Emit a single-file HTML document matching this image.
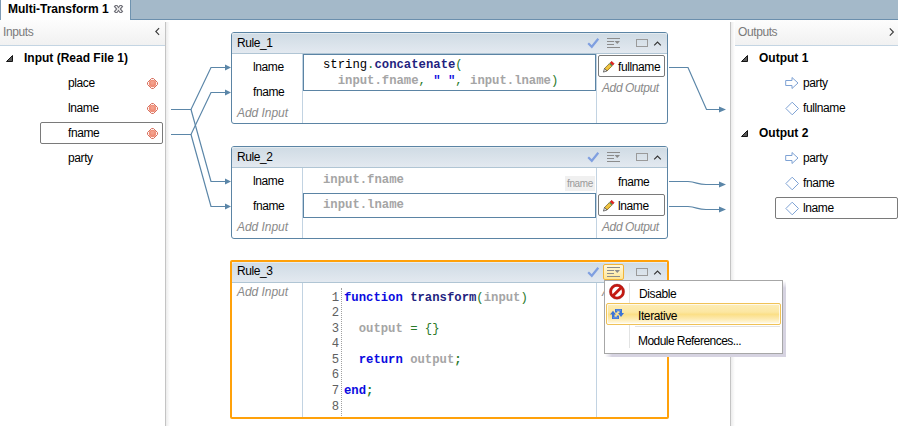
<!DOCTYPE html>
<html><head><meta charset="utf-8">
<style>
*{margin:0;padding:0;box-sizing:border-box}
html,body{width:898px;height:426px;overflow:hidden;background:#fff;position:relative;font-family:"Liberation Sans",sans-serif;font-size:12px;line-height:14px;letter-spacing:-0.4px;color:#000}
.a{position:absolute;white-space:pre}
.mono{font-family:"Liberation Mono",monospace;font-size:12.25px;line-height:15.6px;letter-spacing:0}
#tabbar{left:0;top:0;width:898px;height:20px;background:#a4b9c9;border-bottom:1px solid #6b8fad}
#tab{left:0;top:0;width:130px;height:20px;background:#fff;border-left:1px solid #7e9bb6}
.panelhdr{height:26px;background:linear-gradient(#fdfdfd,#f1f1f1);border-bottom:1px solid #c4d5e3}
.hdrtxt{color:#7a7a7a}
.b{font-weight:bold;font-size:12px;letter-spacing:0}
.rule{border:1px solid #5b84a4;border-radius:3px;background:#fff}
.rhdr{box-shadow:inset 0 1px #e4ebf0;background:linear-gradient(#cfdbe4,#e3e9f0);border-bottom:1px solid #b0c5d4;border-radius:2px 2px 0 0}
.it{font-style:italic;color:#8a8a8a}
.vdiv{width:1px;background:#c2d3e2}
.codebox{border:1px solid #5b84a4}
</style></head><body>

<!-- tab bar -->
<div id="tabbar" class="a"></div>
<div id="tab" class="a"></div>
<div class="a" style="left:130px;top:0;width:1px;height:20px;background:#6f93af"></div>
<div class="a b" style="left:8px;top:2px;font-size:12px">Multi-Transform 1</div>
<svg class="a" style="left:113px;top:4px" width="12" height="11" viewBox="0 0 12 11">
 <path d="M1.5 2.5 L2.5 1.5 L4 1.5 L5.5 3.5 L7 1.5 L8.5 1.5 L9.5 2.5 L7.3 5 L9.5 7.5 L8.5 8.5 L7 8.5 L5.5 6.5 L4 8.5 L2.5 8.5 L1.5 7.5 L3.7 5 Z" fill="#f6f6f6" stroke="#72727a" stroke-width="1.15"/>
</svg>

<!-- left panel -->
<div class="a panelhdr" style="left:0;top:20px;width:165px"></div>
<div class="a hdrtxt" style="left:3px;top:25px">Inputs</div>
<svg class="a" style="left:153px;top:27px" width="8" height="11"><path d="M6.1 1.1 L2.8 4.5 L6.1 7.9" stroke="#3a3a3a" stroke-width="1.1" fill="none"/></svg>
<div class="a" style="left:165px;top:22px;width:1px;height:404px;background:#c4c4c4"></div>
<div class="a" style="left:166px;top:22px;width:4px;height:404px;background:linear-gradient(90deg,#ececec,#fff)"></div>

<svg class="a" style="left:5px;top:54px" width="9" height="9"><path d="M7.5 1.5 L7.5 7.5 L1.5 7.5 Z" fill="#5a5a5a" stroke="#151515" stroke-width="1" stroke-linejoin="miter"/></svg>
<div class="a b" style="left:24px;top:51px">Input (Read File 1)</div>
<div class="a" style="left:68px;top:76px">place</div>
<div class="a" style="left:68px;top:101px">lname</div>
<div class="a" style="left:40px;top:122px;width:123px;height:22px;border:1px solid #7a7a7a;border-radius:2px"></div>
<div class="a" style="left:68px;top:126px">fname</div>
<div class="a" style="left:68px;top:151px">party</div>

<!-- orange diamonds -->
<svg class="a" style="left:146px;top:77px" width="13" height="13" viewBox="0 0 13 13"><path d="M5.5 1.5 H7.5 L11.5 5.5 V7.5 L7.5 11.5 H5.5 L1.5 7.5 V5.5 Z" fill="#fff" stroke="#d6705f" stroke-width="1"/><circle cx="6.5" cy="6.5" r="3.7" fill="#ef8e78"/><circle cx="6.5" cy="5.8" r="2" fill="#f6ab98" opacity="0.6"/></svg>
<svg class="a" style="left:146px;top:102px" width="13" height="13" viewBox="0 0 13 13"><path d="M5.5 1.5 H7.5 L11.5 5.5 V7.5 L7.5 11.5 H5.5 L1.5 7.5 V5.5 Z" fill="#fff" stroke="#d6705f" stroke-width="1"/><circle cx="6.5" cy="6.5" r="3.7" fill="#ef8e78"/><circle cx="6.5" cy="5.8" r="2" fill="#f6ab98" opacity="0.6"/></svg>
<svg class="a" style="left:146px;top:127px" width="13" height="13" viewBox="0 0 13 13"><path d="M5.5 1.5 H7.5 L11.5 5.5 V7.5 L7.5 11.5 H5.5 L1.5 7.5 V5.5 Z" fill="#fff" stroke="#d6705f" stroke-width="1"/><circle cx="6.5" cy="6.5" r="3.7" fill="#ef8e78"/><circle cx="6.5" cy="5.8" r="2" fill="#f6ab98" opacity="0.6"/></svg>

<!-- right panel -->
<div class="a" style="left:730px;top:22px;width:1px;height:404px;background:#c4c4c4"></div>
<div class="a" style="left:731px;top:22px;width:4px;height:404px;background:linear-gradient(90deg,#ececec,#fff)"></div>
<div class="a panelhdr" style="left:735px;top:20px;width:163px"></div>
<div class="a hdrtxt" style="left:738px;top:25px">Outputs</div>
<svg class="a" style="left:888px;top:27px" width="8" height="11"><path d="M1.8 1.3 L5.4 5 L1.8 8.7" stroke="#3a3a3a" stroke-width="1.1" fill="none"/></svg>

<svg class="a" style="left:740px;top:54px" width="9" height="9"><path d="M7.5 1.5 L7.5 7.5 L1.5 7.5 Z" fill="#5a5a5a" stroke="#151515" stroke-width="1" stroke-linejoin="miter"/></svg>
<div class="a b" style="left:759px;top:51px">Output 1</div>
<svg class="a" style="left:784px;top:76px" width="16" height="14"><path d="M1.7 4.5 H8 V1.5 L14 7 L8 12.5 V9.5 H1.7 Z" fill="none" stroke="#7ea2d4" stroke-width="1"/></svg>
<div class="a" style="left:803px;top:76px">party</div>
<svg class="a" style="left:785px;top:101px" width="15" height="15"><path d="M7.2 1.2 L13.5 7.5 L7.2 13.8 L0.9 7.5 Z" fill="none" stroke="#7ea2d4" stroke-width="1"/></svg>
<div class="a" style="left:803px;top:101px">fullname</div>

<svg class="a" style="left:740px;top:129px" width="9" height="9"><path d="M7.5 1.5 L7.5 7.5 L1.5 7.5 Z" fill="#5a5a5a" stroke="#151515" stroke-width="1" stroke-linejoin="miter"/></svg>
<div class="a b" style="left:759px;top:126px">Output 2</div>
<svg class="a" style="left:784px;top:151px" width="16" height="14"><path d="M1.7 4.5 H8 V1.5 L14 7 L8 12.5 V9.5 H1.7 Z" fill="none" stroke="#7ea2d4" stroke-width="1"/></svg>
<div class="a" style="left:803px;top:151px">party</div>
<svg class="a" style="left:785px;top:176px" width="15" height="15"><path d="M7.2 1.2 L13.5 7.5 L7.2 13.8 L0.9 7.5 Z" fill="none" stroke="#7ea2d4" stroke-width="1"/></svg>
<div class="a" style="left:803px;top:176px">fname</div>
<div class="a" style="left:775px;top:197px;width:123px;height:22px;border:1px solid #7a7a7a;border-radius:2px"></div>
<svg class="a" style="left:785px;top:201px" width="15" height="15"><path d="M7.2 1.2 L13.5 7.5 L7.2 13.8 L0.9 7.5 Z" fill="none" stroke="#7ea2d4" stroke-width="1"/></svg>
<div class="a" style="left:803px;top:201px">lname</div>

<!-- connectors -->
<svg class="a" style="left:0;top:0" width="898" height="426">
 <g stroke="#5b86a8" stroke-width="1.2" fill="none">
  <path d="M171 109.5 H191 L211 67.5 H226"/>
  <path d="M191 109.5 L211 181.5 H226"/>
  <path d="M171 134.5 H191 L211 92.5 H226"/>
  <path d="M191 134.5 L211 206.5 H226"/>
  <path d="M669 67.5 H688 L706.5 109.5 H720"/>
  <path d="M669 181.5 H688 C697 182 697 184.5 706 184.5 H720"/>
  <path d="M669 206.5 H688 C697 207 697 209.5 706 209.5 H720"/>
 </g>
 <g fill="#5b86a8">
  <path d="M225 64.5 L231 67.5 L225 70.5 Z"/>
  <path d="M225 89.5 L231 92.5 L225 95.5 Z"/>
  <path d="M225 178.5 L231 181.5 L225 184.5 Z"/>
  <path d="M225 203.5 L231 206.5 L225 209.5 Z"/>
  <path d="M719 106.5 L726 109.5 L719 112.5 Z"/>
  <path d="M719 181.5 L726 184.5 L719 187.5 Z"/>
  <path d="M719 206.5 L726 209.5 L719 212.5 Z"/>
 </g>
</svg>

<!-- RULES -->

<!-- ===== Rule 1 ===== -->
<div class="a rule" style="left:231px;top:32px;width:437px;height:92px"></div>
<div class="a rhdr" style="left:232px;top:33px;width:435px;height:21px"></div>
<div class="a" style="left:237px;top:36px">Rule_1</div>
<div class="a vdiv" style="left:302px;top:54px;height:69px"></div>
<div class="a vdiv" style="left:596px;top:54px;height:69px"></div>
<div class="a codebox" style="left:303px;top:54px;width:293px;height:37px"></div>
<div class="a" style="left:253px;top:60px">lname</div>
<div class="a" style="left:253px;top:85px">fname</div>
<div class="a it" style="left:237px;top:106px;letter-spacing:-0.05px">Add Input</div>
<div class="a mono" style="left:323px;top:58px"><span style="color:#000">string</span><span style="color:#2a7a2a">.</span><b style="color:#1f1f80">concatenate</b><span style="color:#2a7a2a">(</span></div>
<div class="a mono" style="left:323px;top:74px">  <b style="color:#a5a5a5">input.fname</b><span style="color:#2a7a2a">, </span><b style="color:#1010e0">" "</b><span style="color:#2a7a2a">, </span><b style="color:#a5a5a5">input.lname</b><span style="color:#2a7a2a">)</span></div>
<div class="a" style="left:598px;top:55px;width:67px;height:22px;border:1px solid #7a7a7a;border-radius:2px"></div>
<div class="a" style="left:618px;top:60px">fullname</div>
<div class="a it" style="left:602px;top:81px">Add Output</div>

<!-- ===== Rule 2 ===== -->
<div class="a rule" style="left:231px;top:146px;width:437px;height:93px"></div>
<div class="a rhdr" style="left:232px;top:147px;width:435px;height:21px"></div>
<div class="a" style="left:237px;top:150px">Rule_2</div>
<div class="a vdiv" style="left:302px;top:168px;height:70px"></div>
<div class="a vdiv" style="left:596px;top:168px;height:70px"></div>
<div class="a" style="left:253px;top:174px">lname</div>
<div class="a" style="left:253px;top:199px">fname</div>
<div class="a it" style="left:237px;top:220px;letter-spacing:-0.05px">Add Input</div>
<div class="a mono" style="left:323px;top:173px"><b style="color:#a5a5a5">input.fname</b></div>
<div class="a" style="left:565px;top:176px;width:30px;height:15px;background:#f0f0f0"></div>
<div class="a" style="left:567px;top:177px;font-size:10px;color:#9a9a9a">fname</div>
<div class="a codebox" style="left:303px;top:193px;width:293px;height:25px"></div>
<div class="a mono" style="left:323px;top:198px"><b style="color:#a5a5a5">input.lname</b></div>
<div class="a" style="left:618px;top:175px">fname</div>
<div class="a" style="left:598px;top:194px;width:67px;height:22px;border:1px solid #7a7a7a;border-radius:2px"></div>
<div class="a" style="left:618px;top:199px">lname</div>
<div class="a it" style="left:602px;top:220px">Add Output</div>

<!-- ===== Rule 3 ===== -->
<div class="a" style="left:230px;top:260px;width:439px;height:159px;border:2px solid #ffa10a;border-radius:2px;background:#fff"></div>
<div class="a rhdr" style="left:232px;top:262px;width:435px;height:21px"></div>
<div class="a" style="left:237px;top:264px">Rule_3</div>
<div class="a vdiv" style="left:302px;top:283px;height:134px"></div>
<div class="a vdiv" style="left:596px;top:283px;height:134px"></div>
<div class="a it" style="left:237px;top:285px;letter-spacing:-0.05px">Add Input</div>
<div class="a it" style="left:602px;top:285px">Add Output</div>
<div class="a" style="left:341px;top:288px;height:128px;border-left:1px dotted #a0a0a0"></div>
<div class="a mono" style="left:320px;top:290.5px;width:19px;text-align:right;color:#606060;line-height:15.6px">1
2
3
4
5
6
7
8</div>
<div class="a mono" style="left:344px;top:290.5px;line-height:15.6px"><b style="color:#0b0bdf">function</b> <b style="color:#1f1f80">transform</b><span style="color:#2a7a2a">(</span><b style="color:#a5a5a5">input</b><span style="color:#2a7a2a">)</span>

  <b style="color:#a5a5a5">output</b> <span style="color:#2a7a2a">= {}</span>

  <b style="color:#0b0bdf">return</b> <b style="color:#a5a5a5">output</b><b style="color:#2a7a2a">;</b>

<b style="color:#0b0bdf">end</b><b style="color:#2a7a2a">;</b>
</div>

<svg class="a" style="left:586px;top:37px" width="14" height="12" viewBox="0 0 14 12"><path d="M2.2 6.2 L5.8 9.8 L12.3 1.8" stroke="#7f9fe0" stroke-width="2.2" fill="none"/></svg>
<svg class="a" style="left:606px;top:37px" width="16" height="12" viewBox="0 0 16 12"><g fill="#8c8c8c"><rect x="1" y="1" width="13" height="1"/><rect x="1" y="4" width="7" height="1"/><rect x="1" y="7" width="7" height="1"/><rect x="1" y="10" width="13" height="1"/><path d="M8.5 4 L14 4 L11.25 7 Z"/></g></svg>
<div class="a" style="left:636px;top:39px;width:12px;height:8px;border:1px solid #9a9a9a"></div>
<svg class="a" style="left:653px;top:37px" width="10" height="12" viewBox="0 0 10 12"><path d="M1.2 8.3 L4.5 5 L7.8 8.3" stroke="#333" stroke-width="1.15" fill="none"/></svg>

<svg class="a" style="left:586px;top:151px" width="14" height="12" viewBox="0 0 14 12"><path d="M2.2 6.2 L5.8 9.8 L12.3 1.8" stroke="#7f9fe0" stroke-width="2.2" fill="none"/></svg>
<svg class="a" style="left:606px;top:151px" width="16" height="12" viewBox="0 0 16 12"><g fill="#8c8c8c"><rect x="1" y="1" width="13" height="1"/><rect x="1" y="4" width="7" height="1"/><rect x="1" y="7" width="7" height="1"/><rect x="1" y="10" width="13" height="1"/><path d="M8.5 4 L14 4 L11.25 7 Z"/></g></svg>
<div class="a" style="left:636px;top:153px;width:12px;height:8px;border:1px solid #9a9a9a"></div>
<svg class="a" style="left:653px;top:151px" width="10" height="12" viewBox="0 0 10 12"><path d="M1.2 8.3 L4.5 5 L7.8 8.3" stroke="#333" stroke-width="1.15" fill="none"/></svg>

<svg class="a" style="left:586px;top:266px" width="14" height="12" viewBox="0 0 14 12"><path d="M2.2 6.2 L5.8 9.8 L12.3 1.8" stroke="#7f9fe0" stroke-width="2.2" fill="none"/></svg>
<svg class="a" style="left:606px;top:266px" width="16" height="12" viewBox="0 0 16 12"><g fill="#8c8c8c"><rect x="1" y="1" width="13" height="1"/><rect x="1" y="4" width="7" height="1"/><rect x="1" y="7" width="7" height="1"/><rect x="1" y="10" width="13" height="1"/><path d="M8.5 4 L14 4 L11.25 7 Z"/></g></svg>
<div class="a" style="left:636px;top:268px;width:12px;height:8px;border:1px solid #9a9a9a"></div>
<svg class="a" style="left:653px;top:266px" width="10" height="12" viewBox="0 0 10 12"><path d="M1.2 8.3 L4.5 5 L7.8 8.3" stroke="#333" stroke-width="1.15" fill="none"/></svg>


<!-- highlighted menu button in Rule_3 -->
<div class="a" style="left:603px;top:264px;width:21px;height:16px;border:1px solid #f2b53a;border-radius:2px;background:linear-gradient(#fff8dc,#ffe697)"></div>
<svg class="a" style="left:606px;top:266px" width="16" height="12" viewBox="0 0 16 12"><g fill="#8c8c8c"><rect x="1" y="1" width="13" height="1"/><rect x="1" y="4" width="7" height="1"/><rect x="1" y="7" width="7" height="1"/><rect x="1" y="10" width="13" height="1"/><path d="M8.5 4 L14 4 L11.25 7 Z"/></g></svg>

<!-- popup menu -->
<div class="a" style="left:783px;top:281px;width:3px;height:76px;background:linear-gradient(#fff,#d6d3e1 7px)"></div>
<div class="a" style="left:605px;top:354px;width:181px;height:3px;background:linear-gradient(90deg,#fff,#d6d3e1 7px)"></div>
<div class="a" style="left:604px;top:280px;width:179px;height:74px;border:1px solid #a7a7a7;background:#fff"></div>
<div class="a" style="left:629px;top:283px;width:1px;height:65px;background:#e2e3e3"></div>
<div class="a" style="left:606px;top:303px;width:175px;height:22px;border:1px solid #f0c257;border-radius:2px;box-shadow:inset 0 0 0 1px rgba(255,255,255,0.7);background:linear-gradient(#fdedb8 0%,#fce7a2 40%,#fbdf87 52%,#fdeab0 75%,#fffbeb 100%)"></div>
<div class="a" style="left:635px;top:326px;width:145px;height:1px;background:#e2e3e3"></div>
<div class="a" style="left:639px;top:287px">Disable</div>
<div class="a" style="left:638px;top:309px">Iterative</div>
<div class="a" style="left:638px;top:334px;letter-spacing:-0.55px">Module References...</div>
<svg class="a" style="left:608px;top:283px" width="18" height="18" viewBox="0 0 18 18"><circle cx="9" cy="8.7" r="6.3" fill="#fff" stroke="#c41a12" stroke-width="2.7"/><circle cx="9" cy="8.7" r="7.6" fill="none" stroke="#8a1010" stroke-width="0.6" opacity="0.6"/><path d="M13.5 4.2 L4.5 13.2" stroke="#c41a12" stroke-width="3"/></svg>
<svg class="a" style="left:607px;top:305px" width="20" height="17" viewBox="0 0 20 17"><g fill="#3c74d6"><path d="M8 4 H15 V8 H17 L14 12 L11 8 H12.5 V6.2 H10.2 V7.5 H8 Z"/><path d="M12 14 H5 V9.5 H3 L6 5.8 L9 9.5 H7.5 V11.8 H9.8 V10.5 H12 Z"/></g><g fill="#8fb3ee" opacity="0.8"><rect x="9" y="4.8" width="5" height="0.7"/><rect x="6" y="12.5" width="5" height="0.7"/></g></svg>

<!-- pencils -->
<svg class="a" style="left:600px;top:59px" width="15" height="15" viewBox="0 0 15 15"><path d="M7.07 11.97 L11.87 7.17 L9.33 4.63 L4.53 9.43 Z" fill="#f0c440" stroke="#6a5418" stroke-width="0.7" stroke-linejoin="round"/><path d="M8.2 10.6 L10.6 8.2" stroke="#c08a18" stroke-width="0.8"/><path d="M3.4 13.1 L7.07 11.97 L4.53 9.43 Z" fill="#ece6da" stroke="#444" stroke-width="0.7" stroke-linejoin="round"/><path d="M11.87 7.17 L12.67 6.37 L10.13 3.83 L9.33 4.63 Z" fill="#3a9a50"/><path d="M12.67 6.37 L14.2 4.8 L11.7 2.3 L10.13 3.83 Z" fill="#e8201a" stroke="#b01010" stroke-width="0.5" stroke-linejoin="round"/></svg>
<svg class="a" style="left:600px;top:198px" width="15" height="15" viewBox="0 0 15 15"><path d="M7.07 11.97 L11.87 7.17 L9.33 4.63 L4.53 9.43 Z" fill="#f0c440" stroke="#6a5418" stroke-width="0.7" stroke-linejoin="round"/><path d="M8.2 10.6 L10.6 8.2" stroke="#c08a18" stroke-width="0.8"/><path d="M3.4 13.1 L7.07 11.97 L4.53 9.43 Z" fill="#ece6da" stroke="#444" stroke-width="0.7" stroke-linejoin="round"/><path d="M11.87 7.17 L12.67 6.37 L10.13 3.83 L9.33 4.63 Z" fill="#3a9a50"/><path d="M12.67 6.37 L14.2 4.8 L11.7 2.3 L10.13 3.83 Z" fill="#e8201a" stroke="#b01010" stroke-width="0.5" stroke-linejoin="round"/></svg>


</body></html>
